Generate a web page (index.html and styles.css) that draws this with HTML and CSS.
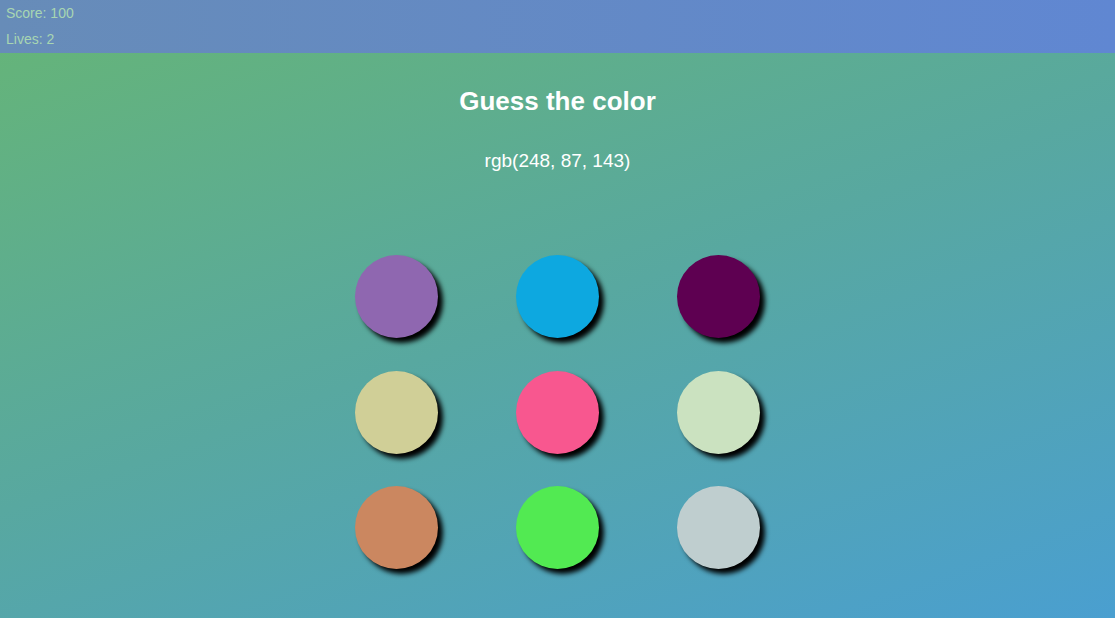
FILE: index.html
```html
<!DOCTYPE html>
<html lang="en">
<head>
<meta charset="utf-8">
<title>Guess the color</title>
<link rel="stylesheet" href="styles.css">
</head>
<body>
<header class="topbar">
  <div class="stat">Score: 100</div>
  <div class="stat">Lives: 2</div>
</header>
<main class="game">
  <h1 class="title">Guess the color</h1>
  <p class="target">rgb(248, 87, 143)</p>
  <div class="board">
    <div class="dot" style="background: rgb(143, 103, 176)"></div>
    <div class="dot" style="background: rgb(13, 168, 224)"></div>
    <div class="dot" style="background: rgb(94, 0, 81)"></div>
    <div class="dot" style="background: rgb(208, 207, 151)"></div>
    <div class="dot" style="background: rgb(248, 87, 143)"></div>
    <div class="dot" style="background: rgb(203, 226, 192)"></div>
    <div class="dot" style="background: rgb(203, 135, 96)"></div>
    <div class="dot" style="background: rgb(82, 234, 82)"></div>
    <div class="dot" style="background: rgb(191, 206, 207)"></div>
  </div>
</main>
</body>
</html>
```
FILE: styles.css
```css
html, body {
  margin: 0;
  padding: 0;
  height: 100%;
}
body {
  font-family: "Liberation Sans", Arial, sans-serif;
  background: linear-gradient(160deg, #66b576 0%, #58a8a0 50%, #4a9fd0 100%);
  min-height: 618px;
  color: #fff;
}
.topbar {
  height: 53px;
  box-sizing: border-box;
  padding: 5px 6px 0;
  background: linear-gradient(to right, #678cb8, #6087d2);
  display: flex;
  flex-direction: column;
  gap: 10px;
}
.stat {
  font-size: 14px;
  line-height: 16px;
  color: #a8d6b2;
}
.game {
  display: flex;
  flex-direction: column;
  align-items: center;
}
.title {
  margin: 33px 0 0;
  font-size: 26px;
  line-height: 30px;
  font-weight: bold;
}
.target {
  margin: 34px 0 0;
  font-size: 19px;
  line-height: 22px;
}
.board {
  margin-top: 83px;
  display: grid;
  grid-template-columns: repeat(3, 83px);
  column-gap: 78px;
  row-gap: 32.5px;
}
.dot {
  width: 83px;
  height: 83px;
  border-radius: 50%;
  box-shadow: 5px 5px 5px #000;
  cursor: pointer;
}
```
